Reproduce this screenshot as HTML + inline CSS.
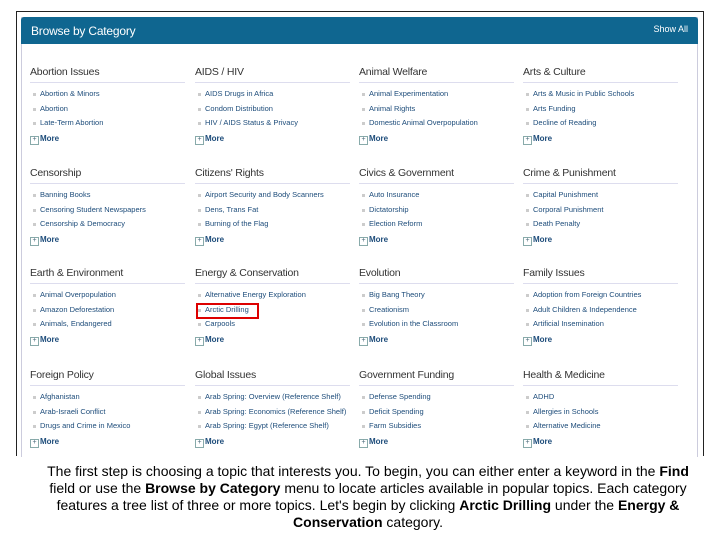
<!DOCTYPE html>
<html><head><meta charset="utf-8"><style>
*{margin:0;padding:0;box-sizing:border-box}
body{width:720px;height:540px;background:#fff;position:relative;overflow:hidden;font-family:"Liberation Sans",Arial,sans-serif}
.outer{position:absolute;left:16px;top:11px;width:688px;height:445px;border:1px solid #222;border-bottom:none}
.panel{position:absolute;left:21px;top:17px;width:677px;height:440px;border:1px solid #ccd;border-bottom:none}
.hdr{position:absolute;left:21px;top:17px;width:677px;height:27px;background:#0f6690;border-radius:3px 3px 0 0;color:#fff}
.hdr .t{position:absolute;left:10px;top:7px;font-size:12px;letter-spacing:-0.2px}
.hdr .s{position:absolute;right:10px;top:7px;font-size:9px}
.c{position:absolute;width:155px}
.c .h{font-size:10.5px;color:#333;height:17px;line-height:12px;border-bottom:1px solid #dde;letter-spacing:-0.2px;white-space:nowrap;margin-bottom:4px}
.c .i{font-size:7.5px;color:#1d4c7a;height:14.5px;line-height:14.5px;padding-left:10px;position:relative;white-space:nowrap;overflow:hidden}
.c .i:before{content:"";position:absolute;left:3px;top:6px;width:3px;height:3px;background:#ccc}
.c .m{font-size:8px;font-weight:bold;color:#1d4c7a;padding-left:10px;position:relative;margin-top:2px;height:12px;line-height:12px}
.c .m:before{content:"+";position:absolute;left:0;top:3px;width:7px;height:7px;border:1px solid #8aa;font-size:7px;line-height:5px;text-align:center;color:#467;font-weight:normal}
.red{position:absolute;left:196px;top:303px;width:63px;height:16px;border:2px solid #d00}
.txt{position:absolute;left:8px;top:463px;width:720px;text-align:center;font-size:14px;line-height:17px;color:#000;letter-spacing:0;white-space:nowrap}
</style></head><body>
<div class="outer"></div>
<div class="panel"></div>
<div class="hdr"><span class="t">Browse by Category</span><span class="s">Show All</span></div>

<div class="c" style="left:30px;top:66px"><div class="h">Abortion Issues</div><div class="i">Abortion &amp; Minors</div><div class="i">Abortion</div><div class="i">Late-Term Abortion</div><div class="m">More</div></div>
<div class="c" style="left:195px;top:66px"><div class="h">AIDS / HIV</div><div class="i">AIDS Drugs in Africa</div><div class="i">Condom Distribution</div><div class="i">HIV / AIDS Status &amp; Privacy</div><div class="m">More</div></div>
<div class="c" style="left:359px;top:66px"><div class="h">Animal Welfare</div><div class="i">Animal Experimentation</div><div class="i">Animal Rights</div><div class="i">Domestic Animal Overpopulation</div><div class="m">More</div></div>
<div class="c" style="left:523px;top:66px"><div class="h">Arts &amp; Culture</div><div class="i">Arts &amp; Music in Public Schools</div><div class="i">Arts Funding</div><div class="i">Decline of Reading</div><div class="m">More</div></div>

<div class="c" style="left:30px;top:167px"><div class="h">Censorship</div><div class="i">Banning Books</div><div class="i">Censoring Student Newspapers</div><div class="i">Censorship &amp; Democracy</div><div class="m">More</div></div>
<div class="c" style="left:195px;top:167px"><div class="h">Citizens' Rights</div><div class="i">Airport Security and Body Scanners</div><div class="i">Dens, Trans Fat</div><div class="i">Burning of the Flag</div><div class="m">More</div></div>
<div class="c" style="left:359px;top:167px"><div class="h">Civics &amp; Government</div><div class="i">Auto Insurance</div><div class="i">Dictatorship</div><div class="i">Election Reform</div><div class="m">More</div></div>
<div class="c" style="left:523px;top:167px"><div class="h">Crime &amp; Punishment</div><div class="i">Capital Punishment</div><div class="i">Corporal Punishment</div><div class="i">Death Penalty</div><div class="m">More</div></div>

<div class="c" style="left:30px;top:267px"><div class="h">Earth &amp; Environment</div><div class="i">Animal Overpopulation</div><div class="i">Amazon Deforestation</div><div class="i">Animals, Endangered</div><div class="m">More</div></div>
<div class="c" style="left:195px;top:267px"><div class="h">Energy &amp; Conservation</div><div class="i">Alternative Energy Exploration</div><div class="i">Arctic Drilling</div><div class="i">Carpools</div><div class="m">More</div></div>
<div class="c" style="left:359px;top:267px"><div class="h">Evolution</div><div class="i">Big Bang Theory</div><div class="i">Creationism</div><div class="i">Evolution in the Classroom</div><div class="m">More</div></div>
<div class="c" style="left:523px;top:267px"><div class="h">Family Issues</div><div class="i">Adoption from Foreign Countries</div><div class="i">Adult Children &amp; Independence</div><div class="i">Artificial Insemination</div><div class="m">More</div></div>

<div class="c" style="left:30px;top:369px"><div class="h">Foreign Policy</div><div class="i">Afghanistan</div><div class="i">Arab-Israeli Conflict</div><div class="i">Drugs and Crime in Mexico</div><div class="m">More</div></div>
<div class="c" style="left:195px;top:369px"><div class="h">Global Issues</div><div class="i">Arab Spring: Overview (Reference Shelf)</div><div class="i">Arab Spring: Economics (Reference Shelf)</div><div class="i">Arab Spring: Egypt (Reference Shelf)</div><div class="m">More</div></div>
<div class="c" style="left:359px;top:369px"><div class="h">Government Funding</div><div class="i">Defense Spending</div><div class="i">Deficit Spending</div><div class="i">Farm Subsidies</div><div class="m">More</div></div>
<div class="c" style="left:523px;top:369px"><div class="h">Health &amp; Medicine</div><div class="i">ADHD</div><div class="i">Allergies in Schools</div><div class="i">Alternative Medicine</div><div class="m">More</div></div>

<div class="red"></div>
<div class="txt">The first step is choosing a topic that interests you. To begin, you can either enter a keyword in the <b>Find</b><br>field or use the <b>Browse by Category</b> menu to locate articles available in popular topics. Each category<br>features a tree list of three or more topics. Let's begin by clicking <b>Arctic Drilling</b> under the <b>Energy &amp;</b><br><b>Conservation</b> category.</div>
</body></html>
